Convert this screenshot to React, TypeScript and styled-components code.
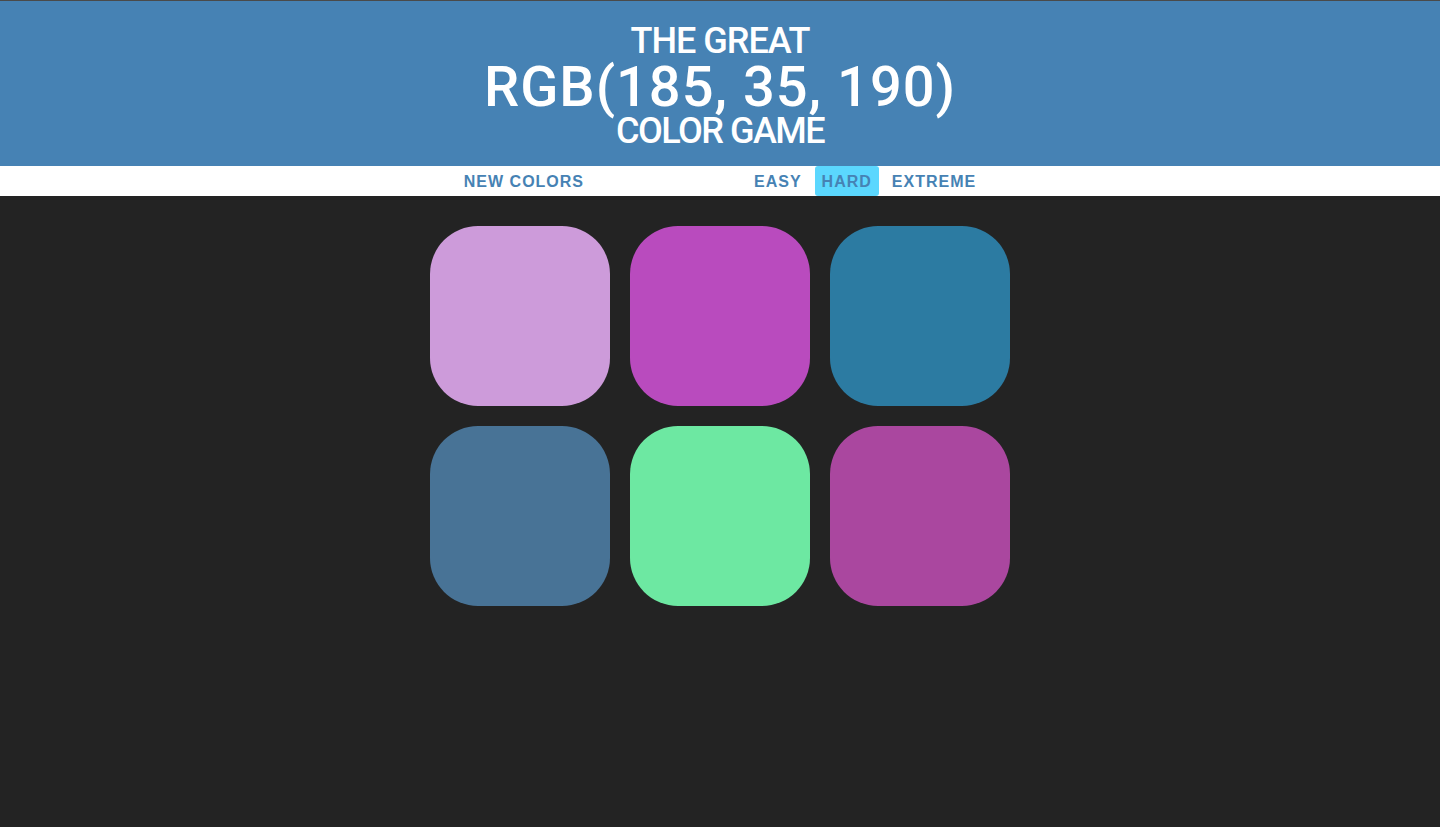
import React from "react";
import styled, { createGlobalStyle } from "styled-components";

const Global = createGlobalStyle`
  html, body { margin: 0; padding: 0; background: #232323; }
  body { border-top: 1px solid #4a4a4a; }
`;

const Page = styled.div`
  min-height: 826px;
  background: #232323;
  font-family: Roboto, "DejaVu Sans", sans-serif;
`;

const Header = styled.h1`
  margin: 0;
  background: #4682b4;
  color: #fff;
  text-align: center;
  text-transform: uppercase;
  font-weight: normal;
  height: 165px;
  padding-top: 20px;
  box-sizing: border-box;
  display: flex;
  flex-direction: column;
  align-items: center;
`;

const Line = styled.span<{ $size: number; $lh: number; $ls: number }>`
  display: block;
  font-family: Roboto, "DejaVu Sans", sans-serif;
  font-size: ${(p) => p.$size}px;
  line-height: ${(p) => p.$lh}px;
  letter-spacing: ${(p) => p.$ls}px;
  font-weight: 500;
`;

const Stripe = styled.nav`
  background: #fff;
  height: 30px;
  display: flex;
  justify-content: center;
  align-items: stretch;
  gap: 6px;
`;

const NavButton = styled.button<{ $active?: boolean }>`
  border: none;
  background: ${(p) => (p.$active ? "#5bd7fe" : "transparent")};
  color: #4682b4;
  font-family: "Liberation Sans", Arial, sans-serif;
  font-weight: 700;
  font-size: 16px;
  letter-spacing: 1px;
  text-transform: uppercase;
  padding: 1px 7px 0;
  border-radius: 3px;
  cursor: pointer;
  outline: none;
`;

const Message = styled.span`
  width: 144px;
`;

const Grid = styled.div`
  display: grid;
  grid-template-columns: repeat(3, 180px);
  gap: 20px;
  justify-content: center;
  padding-top: 30px;
`;

const Square = styled.div<{ $color: string }>`
  width: 180px;
  height: 180px;
  border-radius: 48px;
  background: ${(p) => p.$color};
`;

const colors = [
  "rgb(205, 155, 218)",
  "rgb(185, 75, 190)",
  "rgb(44, 123, 162)",
  "rgb(72, 115, 150)",
  "rgb(109, 232, 162)",
  "rgb(170, 71, 159)",
];

export default function App() {
  return (
    <Page>
      <Global />
      <Header>
        <Line $size={36} $lh={40} $ls={-1}>The Great</Line>
        <Line $size={56} $lh={52} $ls={1}>RGB(185, 35, 190)</Line>
        <Line $size={36} $lh={36} $ls={-1.5}>Color Game</Line>
      </Header>
      <Stripe>
        <NavButton>New Colors</NavButton>
        <Message />
        <NavButton>Easy</NavButton>
        <NavButton $active>Hard</NavButton>
        <NavButton>Extreme</NavButton>
      </Stripe>
      <Grid>
        {colors.map((c, i) => (
          <Square key={i} $color={c} />
        ))}
      </Grid>
    </Page>
  );
}
